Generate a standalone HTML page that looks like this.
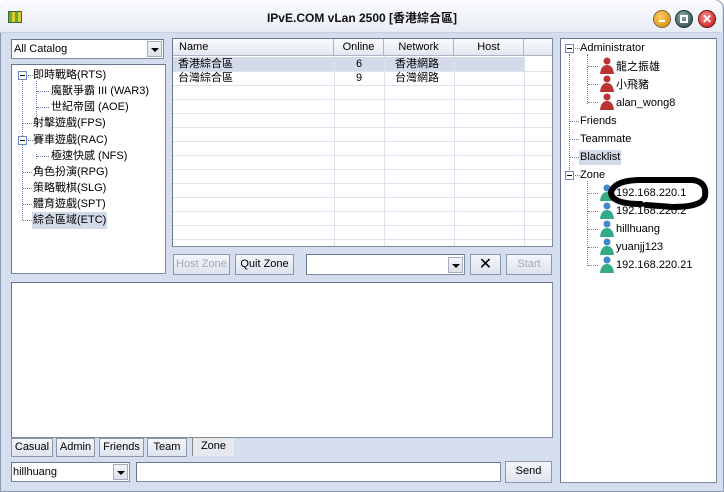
<!DOCTYPE html>
<html><head><meta charset="utf-8"><style>
*{margin:0;padding:0;box-sizing:border-box}
body{width:724px;height:492px;overflow:hidden;background:#fff;font-family:"Liberation Sans","Noto Sans CJK TC",sans-serif;font-size:11px;color:#000;position:relative}
.a{position:absolute}
.win{left:0;top:0;width:724px;height:492px;background:#d5deee;border:1px solid #8a98b0;border-radius:8px 8px 0 0}
.title{left:0;top:0;width:722px;height:33px;background:linear-gradient(#fbfcfe,#e8edf5);border-radius:8px 8px 0 0;border-bottom:1px solid #c5cfdf}
.box{background:#fff;border:1px solid #7f8ba0;border-top-color:#6a7690;border-left-color:#6a7690}
.btn{background:linear-gradient(#f4f6fa,#dde3ee);border:1px solid #8d97a8;text-align:center;line-height:19px;font-size:11px}
.t{position:absolute;white-space:nowrap;font-size:11px;line-height:13px}
.dot{position:absolute;border-left:1px dotted #6a7fb0}
.hd{position:absolute;border-top:1px dotted #6a7fb0;height:0}
.pm{position:absolute;width:9px;height:9px;border:1px solid #6a88c0;background:#fff}
.pm:after{content:"";position:absolute;left:1px;top:3px;width:5px;height:1px;background:#000}
.th{position:absolute;top:0;height:17px;background:linear-gradient(#fafbfd,#e3e8f1);border-right:1px solid #aab4c5;border-bottom:1px solid #aab4c5;line-height:17px;text-align:center}
.hl{position:absolute;left:0;width:100%;border-top:1px solid #dde3ec}
.vl{position:absolute;top:17px;height:190px;border-left:1px solid #dde3ec}
.dd{position:absolute;width:15px;background:linear-gradient(#f3f5f9,#dbe1ec);border:1px solid #a3adbe}
.dd:after{content:"";position:absolute;left:3px;top:6px;border-left:4px solid transparent;border-right:4px solid transparent;border-top:4px solid #000}
</style></head><body>
<div class="a win"></div>
<div class="a title"></div>
<div class="a" style="left:8px;top:11px;width:14px;height:12px;background:linear-gradient(90deg,#6a3 0 3px,#dc3 3px 6px,#6a3 6px 9px,#dc3 9px 12px,#6a3 12px);border:1px solid #463"></div>
<div class="t" style="left:0;width:724px;text-align:center;top:11px;font-weight:bold;font-size:12px;line-height:15px;color:#111">IPvE.COM vLan 2500 [香港綜合區]</div>
<div class="a" style="left:653px;top:10px;width:18px;height:18px;border-radius:50%;background:radial-gradient(circle at 40% 35%,#fc6,#c80);border:1px solid #864"></div>
<div class="a" style="left:659px;top:20px;width:6px;height:2px;background:#fff"></div>
<div class="a" style="left:675px;top:10px;width:18px;height:18px;border-radius:50%;background:radial-gradient(circle at 40% 35%,#8aa,#244);border:1px solid #233"></div>
<div class="a" style="left:680px;top:15px;width:8px;height:8px;border:2px solid #fff"></div>
<div class="a" style="left:698px;top:10px;width:18px;height:18px;border-radius:50%;background:radial-gradient(circle at 40% 35%,#f88,#b11);border:1px solid #711;color:#fff;font-weight:bold;text-align:center;line-height:16px;font-size:12px">✕</div>

<div class="a box" style="left:11px;top:39px;width:153px;height:20px"><div class="t" style="left:2px;top:3px">All Catalog</div><div class="dd" style="right:1px;top:1px;height:16px"></div></div>
<div class="a box" style="left:11px;top:64px;width:155px;height:210px">
<div class="pm" style="left:6px;top:6px"></div>
<div class="dot" style="left:10px;top:16px;height:139px"></div>
<div class="dot" style="left:24px;top:16px;height:37px"></div>
<div class="dot" style="left:24px;top:89px;height:5px"></div>
<div class="hd" style="left:16px;top:10px;width:5px"></div>
<div class="t" style="left:21px;top:4px">即時戰略(RTS)</div>
<div class="hd" style="left:25px;top:26px;width:12px"></div><div class="t" style="left:39px;top:20px">魔獸爭霸 III (WAR3)</div>
<div class="hd" style="left:25px;top:42px;width:12px"></div><div class="t" style="left:39px;top:36px">世紀帝國 (AOE)</div>
<div class="hd" style="left:11px;top:58px;width:9px"></div><div class="t" style="left:21px;top:52px">射擊遊戲(FPS)</div>
<div class="pm" style="left:6px;top:71px;background:#fff"></div><div class="hd" style="left:16px;top:75px;width:5px"></div><div class="t" style="left:21px;top:69px">賽車遊戲(RAC)</div>
<div class="hd" style="left:25px;top:91px;width:12px"></div><div class="t" style="left:39px;top:85px">極速快感 (NFS)</div>
<div class="hd" style="left:11px;top:107px;width:9px"></div><div class="t" style="left:21px;top:101px">角色扮演(RPG)</div>
<div class="hd" style="left:11px;top:123px;width:9px"></div><div class="t" style="left:21px;top:117px">策略戰棋(SLG)</div>
<div class="hd" style="left:11px;top:139px;width:9px"></div><div class="t" style="left:21px;top:133px">體育遊戲(SPT)</div>
<div class="hd" style="left:11px;top:155px;width:9px"></div><div class="t" style="left:20px;top:147px;background:#d3dbea;padding:2px 1px">綜合區域(ETC)</div>
</div>
<div class="a box" style="left:172px;top:38px;width:381px;height:209px;overflow:hidden">
<div class="th" style="left:0;width:161px;text-align:left;padding-left:6px">Name</div>
<div class="th" style="left:161px;width:50px">Online</div>
<div class="th" style="left:211px;width:70px">Network</div>
<div class="th" style="left:281px;width:70px">Host</div>
<div class="th" style="left:351px;width:31px"></div>
<div class="a" style="left:0;top:18px;width:351px;height:14px;background:#d3dbea"></div>
<div class="hl" style="top:32px"></div><div class="hl" style="top:46px"></div><div class="hl" style="top:60px"></div><div class="hl" style="top:74px"></div><div class="hl" style="top:88px"></div><div class="hl" style="top:102px"></div><div class="hl" style="top:116px"></div><div class="hl" style="top:130px"></div><div class="hl" style="top:144px"></div><div class="hl" style="top:158px"></div><div class="hl" style="top:172px"></div><div class="hl" style="top:186px"></div><div class="hl" style="top:200px"></div>
<div class="vl" style="left:161px"></div><div class="vl" style="left:211px"></div><div class="vl" style="left:281px"></div><div class="vl" style="left:351px"></div>
<div class="t" style="left:5px;top:19px">香港綜合區</div><div class="t" style="left:183px;top:19px">6</div><div class="t" style="left:222px;top:19px">香港網路</div>
<div class="t" style="left:5px;top:33px">台灣綜合區</div><div class="t" style="left:183px;top:33px">9</div><div class="t" style="left:222px;top:33px">台灣網路</div>
</div>
<div class="a btn" style="left:173px;top:254px;width:57px;height:21px;color:#a0a8b8">Host Zone</div>
<div class="a btn" style="left:235px;top:254px;width:59px;height:21px">Quit Zone</div>
<div class="a box" style="left:306px;top:254px;width:159px;height:21px"><div class="dd" style="right:1px;top:2px;height:16px"></div></div>
<div class="a btn" style="left:470px;top:254px;width:31px;height:21px;font-size:16px;line-height:19px">✕</div>
<div class="a btn" style="left:506px;top:254px;width:46px;height:21px;color:#a0a8b8">Start</div>
<div class="a box" style="left:11px;top:282px;width:542px;height:156px"></div>
<div class="a btn" style="left:11px;top:438px;width:42px;height:19px;line-height:17px">Casual</div>
<div class="a btn" style="left:56px;top:438px;width:39px;height:19px;line-height:17px">Admin</div>
<div class="a btn" style="left:99px;top:438px;width:45px;height:19px;line-height:17px">Friends</div>
<div class="a btn" style="left:147px;top:438px;width:40px;height:19px;line-height:17px">Team</div>
<div class="a" style="left:192px;top:437px;width:42px;height:19px;background:#e6eaf0;border-left:1px solid #888;border-top:1px solid #888;text-align:center;line-height:17px">Zone</div>
<div class="a box" style="left:11px;top:462px;width:119px;height:20px"><div class="t" style="left:1px;top:3px">hillhuang</div><div class="dd" style="right:1px;top:1px;height:16px"></div></div>
<div class="a box" style="left:136px;top:462px;width:365px;height:20px"></div>
<div class="a btn" style="left:505px;top:461px;width:47px;height:22px">Send</div>
<div class="a box" style="left:560px;top:38px;width:157px;height:445px">
<div class="pm" style="left:4px;top:5px"></div><div class="hd" style="left:14px;top:9px;width:5px"></div><div class="t" style="left:19px;top:3px">Administrator</div>
<div class="dot" style="left:8px;top:15px;height:124px"></div>
<div class="dot" style="left:26px;top:15px;height:50px"></div>
<div class="hd" style="left:27px;top:27px;width:10px"></div><div class="hd" style="left:27px;top:45px;width:10px"></div><div class="hd" style="left:27px;top:63px;width:10px"></div>
<div class="hd" style="left:9px;top:82px;width:9px"></div><div class="t" style="left:19px;top:76px">Friends</div>
<div class="hd" style="left:9px;top:100px;width:9px"></div><div class="t" style="left:19px;top:94px">Teammate</div>
<div class="hd" style="left:9px;top:118px;width:9px"></div><div class="t" style="left:18px;top:111px;background:#d3dbea;padding:1px 1px">Blacklist</div>
<div class="pm" style="left:4px;top:132px"></div><div class="hd" style="left:14px;top:136px;width:5px"></div><div class="t" style="left:19px;top:130px">Zone</div>
<div class="dot" style="left:26px;top:142px;height:85px"></div>
<div class="hd" style="left:27px;top:154px;width:10px"></div><div class="hd" style="left:27px;top:172px;width:10px"></div><div class="hd" style="left:27px;top:190px;width:10px"></div><div class="hd" style="left:27px;top:208px;width:10px"></div><div class="hd" style="left:27px;top:226px;width:10px"></div>
<svg class="a" style="left:38px;top:18px" width="16" height="54" viewBox="0 0 16 54">
<g fill="#b33"><circle cx="8" cy="4" r="3.5"/><path d="M1 17 Q2 8 8 8 Q14 8 15 17Z"/>
<circle cx="8" cy="22" r="3.5"/><path d="M1 35 Q2 26 8 26 Q14 26 15 35Z"/>
<circle cx="8" cy="40" r="3.5"/><path d="M1 53 Q2 44 8 44 Q14 44 15 53Z"/></g></svg>
<div class="t" style="left:55px;top:22px">龍之振雄</div>
<div class="t" style="left:55px;top:40px">小飛豬</div>
<div class="t" style="left:55px;top:58px">alan_wong8</div>
<svg class="a" style="left:38px;top:145px" width="16" height="90" viewBox="0 0 16 90">
<g fill="#3a8"><circle cx="8" cy="4" r="3.5" fill="#48c"/><path d="M1 17 Q2 8 8 8 Q14 8 15 17Z"/>
<circle cx="8" cy="22" r="3.5" fill="#48c"/><path d="M1 35 Q2 26 8 26 Q14 26 15 35Z"/>
<circle cx="8" cy="40" r="3.5" fill="#48c"/><path d="M1 53 Q2 44 8 44 Q14 44 15 53Z"/>
<circle cx="8" cy="58" r="3.5" fill="#48c"/><path d="M1 71 Q2 62 8 62 Q14 62 15 71Z"/>
<circle cx="8" cy="76" r="3.5" fill="#48c"/><path d="M1 89 Q2 80 8 80 Q14 80 15 89Z"/></g></svg>
<div class="t" style="left:55px;top:148px">192.168.220.1</div>
<div class="t" style="left:55px;top:166px">192.168.220.2</div>
<div class="t" style="left:55px;top:184px">hillhuang</div>
<div class="t" style="left:55px;top:202px">yuanjj123</div>
<div class="t" style="left:55px;top:220px">192.168.220.21</div>
<svg class="a" style="left:40px;top:135px" width="110" height="40" viewBox="0 0 110 40"><path d="M40 30 Q10 30 10 18 Q14 6 40 6 L92 6 Q106 8 104 22 Q102 33 72 33 L45 31" fill="none" stroke="#000" stroke-width="6" stroke-linecap="round"/></svg>
</div>
</body></html>
